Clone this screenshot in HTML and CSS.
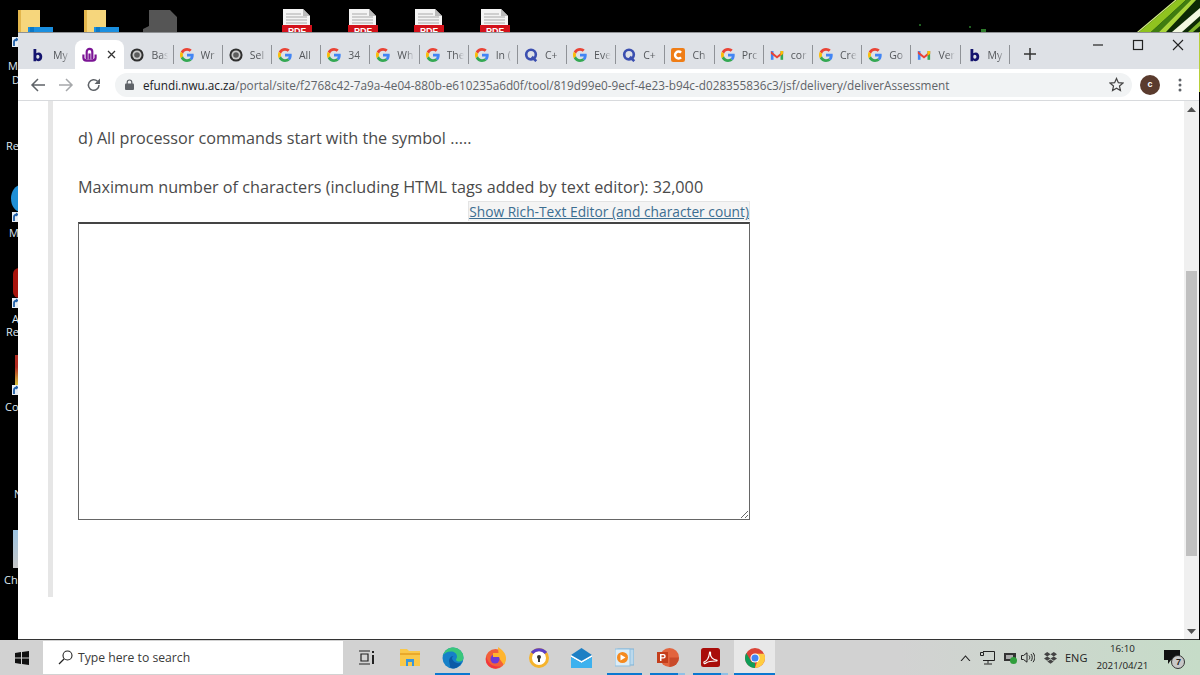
FILE: index.html
```html
<!DOCTYPE html>
<html lang="en">
<head>
<meta charset="utf-8">
<title>Assessment</title>
<link rel="stylesheet" href="styles.css">
</head>
<body>
<svg class="defs" width="0" height="0" aria-hidden="true">
  <symbol id="g" viewBox="0 0 48 48">
    <path fill="#EA4335" d="M24 9.500c3.540 0 6.710 1.220 9.210 3.600l6.850-6.850C35.900 2.380 30.470 0 24 0 14.620 0 6.510 5.380 2.560 13.220l7.980 6.190C12.430 13.720 17.740 9.500 24 9.500z"/>
    <path fill="#4285F4" d="M46.980 24.550c0-1.570-.15-3.090-.38-4.550H24v9.020h12.940c-.58 2.960-2.260 5.480-4.780 7.180l7.730 6c4.510-4.180 7.090-10.360 7.090-17.650z"/>
    <path fill="#FBBC05" d="M10.530 28.590c-.48-1.450-.76-2.990-.76-4.590s.27-3.140.76-4.590l-7.980-6.190C.92 16.460 0 20.120 0 24c0 3.880.92 7.540 2.560 10.780l7.970-6.190z"/>
    <path fill="#34A853" d="M24 48c6.480 0 11.930-2.130 15.890-5.810l-7.730-6c-2.150 1.450-4.920 2.300-8.160 2.300-6.260 0-11.570-4.220-13.470-9.910l-7.980 6.190C6.510 42.620 14.620 48 24 48z"/>
  </symbol>
  <symbol id="b" viewBox="0 0 16 16">
    <path fill="#14146e" d="M4 1h3.200v5C8 5.300 9 5 10 5c2.500 0 4 2 4 5s-1.700 5-4.200 5C8.800 15 7.800 14.600 7 14v1H4zm4.800 6.800C7.700 7.800 7.200 8.700 7.200 10s.5 2.300 1.600 2.300S10.800 11.300 10.800 10s-.9-2.200-2-2.200z"/>
  </symbol>
  <symbol id="nwu" viewBox="0 0 16 16">
    <path fill="none" stroke="#7b1495" stroke-width="2.300" d="M5 13V5a3 3 0 0 1 6 0v8M8 13V7M1.500 8v3.500c0 2 1.500 3 3.500 3h6c2 0 3.500-1 3.500-3V8"/>
  </symbol>
  <symbol id="gear" viewBox="0 0 16 16">
    <circle cx="8" cy="8" r="7.500" fill="#2f2f2f"/><circle cx="8" cy="8" r="5.200" fill="#c9c9c9"/><circle cx="8" cy="8" r="3.200" fill="#5c5c5c"/>
  </symbol>
  <symbol id="q" viewBox="0 0 16 16">
    <circle cx="8" cy="7.500" r="5.500" fill="none" stroke="#3b4fb0" stroke-width="3"/><path d="M9 10l5 5" stroke="#3b4fb0" stroke-width="3"/>
  </symbol>
  <symbol id="c" viewBox="0 0 16 16">
    <rect width="16" height="16" rx="2.500" fill="#ef7d16"/><path d="M11.500 5.200A4 4 0 1 0 11.500 10.800" fill="none" stroke="#fff" stroke-width="2.800"/>
  </symbol>
  <symbol id="m" viewBox="0 0 16 16">
    <path fill="#4285f4" d="M1 3.500h3v10H1z"/><path fill="#34a853" d="M12 3.500h3v10h-3z"/><path fill="#ea4335" d="M1 3.500 8 9l7-5.500v3L8 12 1 6.500z"/><path fill="#fbbc04" d="M12 3.500h3v3l-3 2.400z"/>
  </symbol>
  <symbol id="folder" viewBox="0 0 35 22">
    <path fill="#f6d67c" d="M0 0h22v22H0z"/><path fill="#e3b64c" d="M0 0h3v22H0z"/><path fill="#1a8fe0" d="M10 17h25v5H10z"/><path fill="#0b78c6" d="M12 17h4v5h-4z"/>
  </symbol>
  <symbol id="pdf" viewBox="0 0 30 23">
    <path fill="#f4f4f4" d="M1 0h20l7 7v9H1z"/><path fill="#bbb" d="M21 0l7 7h-7z"/><path stroke="#aaa" d="M4 5h15M4 8h21M4 11h21M4 14h21"/><path fill="#d3111a" d="M0 16h30v7H0z"/>
  </symbol>
  <symbol id="short" viewBox="0 0 7 10">
    <rect width="7" height="10" fill="#e6edf4"/><path d="M2 9V5c0-1.500 1-2.500 3-2.500" fill="none" stroke="#1f5fa8" stroke-width="1.800"/><path fill="#1f5fa8" d="M4 .5 7 2.500 4 4.500z"/>
  </symbol>
</svg>

<div class="desktop">
  <svg class="dicon folder-a" width="35" height="22"><use href="#folder"/></svg>
  <svg class="dicon folder-b" width="35" height="22"><use href="#folder"/></svg>
  <svg class="dicon grey-file" width="35" height="22" viewBox="0 0 35 22"><path fill="#555" d="M6 0h21l7 7v15H0v-3l6-3z"/></svg>
  <div class="dpdf pdf-a"><svg width="30" height="23"><use href="#pdf"/></svg><span class="pdf-label">PDF</span></div>
  <div class="dpdf pdf-b"><svg width="30" height="23"><use href="#pdf"/></svg><span class="pdf-label">PDF</span></div>
  <div class="dpdf pdf-c"><svg width="30" height="23"><use href="#pdf"/></svg><span class="pdf-label">PDF</span></div>
  <div class="dpdf pdf-d"><svg width="30" height="23"><use href="#pdf"/></svg><span class="pdf-label">PDF</span></div>

  <svg class="stripes" width="70" height="32" viewBox="0 0 70 32">
    <path fill="#0c2a05" d="M7 32 45 0h25v32z"/>
    <path fill="#d6e98a" d="M7 32 45 0h2L9 32z"/>
    <path fill="#8fc31f" d="M9 32 47 0h9L21 32z"/>
    <path fill="#3f7d10" d="M21 32 56 0h5L29 32z"/>
    <path fill="#a9d63a" d="M29 32 61 0h5L36 32z"/>
    <path fill="#f2f8e0" d="M42 32 70 8v8L52 32z"/>
    <path fill="#7fb52a" d="M58 32 70 21v5l-7 6z"/>
  </svg>
  <span class="dot dot-a"></span><span class="dot dot-b"></span><span class="dot dot-c"></span>
  <span class="right-strip"></span>

  <span class="dlabel l1">M</span>
  <span class="dlabel l2">D</span>
  <span class="dlabel l3">Re</span>
  <span class="dlabel l4">M</span>
  <span class="dlabel l5">A</span>
  <span class="dlabel l6">Re</span>
  <span class="dlabel l7">Co</span>
  <span class="dlabel l8">N</span>
  <span class="dlabel l9">Ch</span>
  <span class="blob blue"></span><span class="blob red"></span><span class="blob mix"></span><span class="blob bin"></span>
  <svg class="arrow a1" width="7" height="10"><use href="#short"/></svg>
  <svg class="arrow a2" width="7" height="10"><use href="#short"/></svg>
  <svg class="arrow a3" width="7" height="10"><use href="#short"/></svg>
  <svg class="arrow a4" width="7" height="10"><use href="#short"/></svg>

  <div class="window">
    <div class="tabstrip">
      <div class="tab"><svg class="fav" width="14" height="14"><use href="#b"/></svg><span class="tlabel">My</span></div>
      <div class="tab active"><svg class="fav" width="15" height="15"><use href="#nwu"/></svg><svg class="tclose" width="9" height="9" viewBox="0 0 9 9"><path d="M1 1l7 7M8 1 1 8" stroke="#333" stroke-width="1.300"/></svg></div>
      <div class="tab"><svg class="fav" width="14" height="14"><use href="#gear"/></svg><span class="tlabel">Bas</span></div>
      <div class="tab"><svg class="fav" width="14" height="14"><use href="#g"/></svg><span class="tlabel">Wr</span></div>
      <div class="tab"><svg class="fav" width="14" height="14"><use href="#gear"/></svg><span class="tlabel">Sel</span></div>
      <div class="tab"><svg class="fav" width="14" height="14"><use href="#g"/></svg><span class="tlabel">All</span></div>
      <div class="tab"><svg class="fav" width="14" height="14"><use href="#g"/></svg><span class="tlabel">34</span></div>
      <div class="tab"><svg class="fav" width="14" height="14"><use href="#g"/></svg><span class="tlabel">Wh</span></div>
      <div class="tab"><svg class="fav" width="14" height="14"><use href="#g"/></svg><span class="tlabel">The</span></div>
      <div class="tab"><svg class="fav" width="14" height="14"><use href="#g"/></svg><span class="tlabel">In (</span></div>
      <div class="tab"><svg class="fav" width="14" height="14"><use href="#q"/></svg><span class="tlabel">C+</span></div>
      <div class="tab"><svg class="fav" width="14" height="14"><use href="#g"/></svg><span class="tlabel">Eve</span></div>
      <div class="tab"><svg class="fav" width="14" height="14"><use href="#q"/></svg><span class="tlabel">C+</span></div>
      <div class="tab"><svg class="fav" width="14" height="14"><use href="#c"/></svg><span class="tlabel">Ch</span></div>
      <div class="tab"><svg class="fav" width="14" height="14"><use href="#g"/></svg><span class="tlabel">Prc</span></div>
      <div class="tab"><svg class="fav" width="14" height="14"><use href="#m"/></svg><span class="tlabel">cor</span></div>
      <div class="tab"><svg class="fav" width="14" height="14"><use href="#g"/></svg><span class="tlabel">Cre</span></div>
      <div class="tab"><svg class="fav" width="14" height="14"><use href="#g"/></svg><span class="tlabel">Go</span></div>
      <div class="tab"><svg class="fav" width="14" height="14"><use href="#m"/></svg><span class="tlabel">Ver</span></div>
      <div class="tab"><svg class="fav" width="14" height="14"><use href="#b"/></svg><span class="tlabel">My</span></div>
      <svg class="newtab" width="12" height="12" viewBox="0 0 12 12"><path d="M6 0v12M0 6h12" stroke="#333" stroke-width="1.500"/></svg>
      <div class="winctl">
        <svg width="12" height="12" viewBox="0 0 12 12"><path d="M1 6h10" stroke="#222" stroke-width="1.200"/></svg>
        <svg width="12" height="12" viewBox="0 0 12 12"><rect x="1.500" y="1.500" width="9" height="9" fill="none" stroke="#222" stroke-width="1.200"/></svg>
        <svg width="12" height="12" viewBox="0 0 12 12"><path d="M1 1l10 10M11 1 1 11" stroke="#222" stroke-width="1.100"/></svg>
      </div>
    </div>

    <div class="toolbar">
      <svg class="navicon" width="16" height="16" viewBox="0 0 16 16"><path d="M15 8H2M8 2 2 8l6 6" fill="none" stroke="#5f6368" stroke-width="1.500"/></svg>
      <svg class="navicon" width="16" height="16" viewBox="0 0 16 16"><path d="M1 8h13M8 2l6 6-6 6" fill="none" stroke="#a6a8ab" stroke-width="1.500"/></svg>
      <svg class="navicon" width="16" height="16" viewBox="0 0 16 16"><path d="M13 8a5.300 5.300 0 1 1-1.500-3.700" fill="none" stroke="#5f6368" stroke-width="1.500"/><path fill="#5f6368" d="M14 1.500V7H8.500z"/></svg>
      <div class="omnibox">
        <svg width="9" height="11" viewBox="0 0 9 11"><path d="M2.200 5V3.300a2.300 2.300 0 0 1 4.600 0V5" fill="none" stroke="#5f6368" stroke-width="1.200"/><rect y="4.500" width="9" height="6.500" rx="1" fill="#5f6368"/></svg>
        <span class="url"><span class="host">efundi.nwu.ac.za</span>/portal/site/f2768c42-7a9a-4e04-880b-e610235a6d0f/tool/819d99e0-9ecf-4e23-b94c-d028355836c3/jsf/delivery/deliverAssessment</span>
        <svg class="star" width="15" height="15" viewBox="0 0 16 16"><path d="M8 1.500l2 4.500 4.800.5-3.600 3.200 1 4.800L8 12l-4.200 2.500 1-4.800L1.200 6.500 6 6z" fill="none" stroke="#444" stroke-width="1.300"/></svg>
      </div>
      <span class="avatar">c</span>
      <svg class="menu" width="4" height="14" viewBox="0 0 4 14"><circle cx="2" cy="2" r="1.500" fill="#5f6368"/><circle cx="2" cy="7" r="1.500" fill="#5f6368"/><circle cx="2" cy="12" r="1.500" fill="#5f6368"/></svg>
    </div>

    <div class="viewport">
      <div class="rail"></div>
      <main class="main">
        <p class="question">d) All processor commands start with the symbol .....</p>
        <p class="limit">Maximum number of characters (including HTML tags added by text editor): 32,000</p>
        <div class="answer">
          <a class="show" href="#">Show Rich-Text Editor (and character count)</a>
          <textarea class="field" aria-label="Answer"></textarea>
        </div>
      </main>
      <div class="scrollbar">
        <svg class="sarrow" width="9" height="5" viewBox="0 0 9 5"><path d="M4.500 0 9 5H0z" fill="#505050"/></svg>
        <div class="thumb"></div>
        <svg class="sarrow" width="9" height="5" viewBox="0 0 9 5"><path d="M0 0h9L4.500 5z" fill="#505050"/></svg>
      </div>
    </div>
  </div>
</div>

<footer class="taskbar">
  <div class="start"><svg width="14" height="14" viewBox="0 0 14 14"><path fill="#111" d="M0 2l6-.9V6.600H0zM7 1l7-1v6.600H7zM0 7.400h6v5.500l-6-.9zM7 7.400h7V14l-7-1z"/></svg></div>
  <div class="search">
    <svg width="15" height="15" viewBox="0 0 15 15"><circle cx="9.500" cy="5.500" r="4.500" fill="none" stroke="#222" stroke-width="1.100"/><path d="M6 9 1 14" stroke="#222" stroke-width="1.300"/></svg>
    <span>Type here to search</span>
  </div>
  <div class="slot"><svg width="15" height="15" viewBox="0 0 15 15"><path fill="none" stroke="#222" stroke-width="1.200" d="M0 1h11M0 14h11M2 4h7v7H2z"/><path fill="#222" d="M13 1h2v2h-2zM13 5h2v9h-2z"/></svg></div>
  <div class="slot"><svg width="20" height="17" viewBox="0 0 20 17"><path fill="#f9c84a" d="M0 0h7l2 2h11v15H0z"/><path fill="#e9a92b" d="M0 4h20v2H0z"/><path fill="#3a96dc" d="M6 10h8v7h-2v-4H8v4H6z"/></svg></div>
  <div class="slot on"><svg width="22" height="22" viewBox="0 0 22 22"><circle cx="11" cy="11" r="10.500" fill="#1580c8"/><path fill="#39c77b" d="M1 9C2 3 7 .5 11 .5c6 0 10.500 4.500 10.500 10 0 2.500-1.500 4-4 4-2 0-3.500-.7-3.500-1.800 0-1 1-1.200 1-3.200 0-3-3-5-6-5-4 0-7 2-8.500 4.500z"/><path fill="#0c5aa6" d="M7 14c0-3 2-5 4.500-5-2 1-2 3 0 5 2 2 5 3 8 1.500-2 3.500-5 6-8.500 6-2 0-3.500-1-3-3-.5-1-.5-3-1-4.500z"/></svg></div>
  <div class="slot"><svg width="21" height="22" viewBox="0 0 21 22"><circle cx="10.500" cy="12" r="10" fill="#f2603a"/><path fill="#ffb52e" d="M13 0c5 3 8 7 8 11 0 3-1 5-2 7l-5-7c0-3-1-7-1-11z"/><path fill="#f2363f" d="M1 9c2 8 8 12 15 10-4 4-13 3-15-5z"/><circle cx="10" cy="12" r="4.500" fill="#6d3bd6"/><path fill="#ffb52e" d="M8 6h6v4H8z"/></svg></div>
  <div class="slot"><svg width="20" height="20" viewBox="0 0 20 20"><circle cx="10" cy="10" r="8.500" fill="#fff" stroke="#f5b32c" stroke-width="3"/><path fill="none" stroke="#5b3fc7" stroke-width="3" d="M3 5a9 9 0 0 1 14 0"/><circle cx="10" cy="9" r="2" fill="#333"/><path d="M9 10h2v4H9z" fill="#333"/></svg></div>
  <div class="slot"><svg width="21" height="20" viewBox="0 0 21 20"><path fill="#1d7fc4" d="M0 7l10.500-7L21 7v13H0z"/><path fill="#fff" d="M0 7l10.500 6L21 7v2l-10.500 6L0 9z"/><path fill="#3db1ee" d="M0 9l10.500 6L21 9v11H0z"/></svg></div>
  <div class="slot on"><svg width="19" height="19" viewBox="0 0 19 19"><rect x="3" y="1" width="16" height="16" fill="#bcd9ec" stroke="#7fb2d6"/><rect width="15" height="17" y="1" fill="#dcecf6" stroke="#8fbfdf"/><circle cx="7.500" cy="9.500" r="5.500" fill="#f58a1f"/><path fill="#fff" d="M5.500 6.500l5 3-5 3z"/></svg></div>
  <div class="slot on split"><svg width="22" height="19" viewBox="0 0 22 19"><circle cx="12.500" cy="9.500" r="9.500" fill="#e2643e"/><path fill="#c94a2a" d="M12.500 9.500H22a9.500 9.500 0 0 1-9.500 9.500z"/><rect y="4" width="11" height="11" fill="#c43e1c"/><path fill="#fff" d="M3 6h3.500a2.200 2.200 0 0 1 0 4.500H4.500V13H3zm1.500 1.200v2h1.800a1 1 0 0 0 0-2z"/></svg></div>
  <div class="slot on split"><svg width="19" height="19" viewBox="0 0 19 19"><rect width="19" height="19" rx="2.500" fill="#a90d0a"/><path fill="none" stroke="#fff" stroke-width="1.200" d="M3 14c3-1 5-5 5.500-9 0-1.500 1.500-1.500 1 1-.5 3 3 6 6 6 .8 0 .8 1-.5 1-4 0-8 .5-10 2-1.500 1.200-2.500.3-2 -1z"/></svg></div>
  <div class="slot chrome"><svg width="20" height="20" viewBox="0 0 48 48"><circle cx="24" cy="24" r="24" fill="#db4437"/><path fill="#0f9d58" d="M24 48C11 48 0 37 0 24c0-4 1-8 3-12l13 22 8 0z"/><path fill="#ffcd40" d="M24 48c13 0 24-11 24-24 0-4-1-8-3-10H24l8 10z"/><circle cx="24" cy="24" r="11" fill="#fff"/><circle cx="24" cy="24" r="8.500" fill="#4285f4"/></svg></div>
  <div class="tray">
    <svg class="t-chev" width="11" height="6" viewBox="0 0 11 6"><path d="M1 6l4.500-5L10 6" fill="none" stroke="#222" stroke-width="1.100"/></svg>
    <svg class="t-net" width="15" height="14" viewBox="0 0 15 14"><path fill="none" stroke="#222" d="M.5 1.500h3v3h-3zM3 .5h11.500v9H3M8 9.500v3M4 13h8"/></svg>
    <svg class="t-bat" width="13" height="12" viewBox="0 0 13 12"><rect y="1" width="12" height="8" fill="#333"/><rect x="2" y="3" width="7" height="4" fill="#aaa"/><circle cx="9.500" cy="8.500" r="3.500" fill="#2f9e3b"/></svg>
    <svg class="t-vol" width="14" height="11" viewBox="0 0 14 11"><path fill="none" stroke="#222" d="M.5 3.500h2L6 .8v9.400L2.500 7.500h-2zM8 3.500c1 1 1 3 0 4M10 2c1.700 2 1.700 5 0 7M12 .8c2.300 3 2.300 6.400 0 9.400"/></svg>
    <svg class="t-drop" width="13" height="12" viewBox="0 0 13 12"><path fill="#444" d="M3.200 0 6.500 2.200 3.200 4.400 0 2.200zM9.800 0 13 2.200 9.800 4.400 6.500 2.200zM3.200 4.400 6.500 6.600 3.200 8.800 0 6.600zM9.800 4.400 13 6.600 9.800 8.800 6.500 6.600zM3.300 9.500 6.500 7.400l3.200 2.100-3.200 2.200z"/></svg>
    <span class="t-lang">ENG</span>
    <div class="clock"><span>16:10</span><span>2021/04/21</span></div>
    <div class="notify">
      <svg width="16" height="14" viewBox="0 0 16 14"><path fill="#111" d="M0 0h16v10H7l-3 4v-4H0z"/></svg>
      <span class="badge">7</span>
    </div>
  </div>
</footer>
</body>
</html>
```

FILE: styles.css
```css
* { box-sizing: border-box; }
html, body { margin: 0; height: 100%; }
body {
  width: 1200px;
  height: 675px;
  overflow: hidden;
  background: #000;
  font-family: "Open Sans", "Liberation Sans", sans-serif;
  display: flex;
  flex-direction: column;
}
.defs { position: absolute; }

/* Desktop canvas */
.desktop { position: relative; height: 640px; flex: none; background: #000; }
.dicon, .dpdf, .stripes, .dot, .right-strip, .dlabel, .arrow, .blob, .window { position: absolute; }
.dicon { top: 10px; }
.folder-a { left: 18px; }
.folder-b { left: 84px; }
.grey-file { left: 143px; }
.dpdf { top: 9px; width: 30px; height: 23px; }
.dpdf svg { display: block; }
.pdf-a { left: 282px; }
.pdf-b { left: 348px; }
.pdf-c { left: 414px; }
.pdf-d { left: 480px; }
.pdf-label {
  position: absolute;
  left: 0;
  right: 0;
  top: 18px;
  height: 5px;
  overflow: hidden;
  color: #fff;
  font: 700 9px/9px "Liberation Sans", sans-serif;
  text-align: center;
}
.stripes { left: 1130px; top: 0; }
.dot { width: 2px; height: 2px; background: #1f5f20; }
.dot-a { left: 919px; top: 24px; }
.dot-b { left: 969px; top: 26px; }
.dot-c { left: 981px; top: 29px; width: 5px; height: 4px; background: #2d7a2a; }
.right-strip { left: 1198px; top: 32px; width: 2px; height: 60px; background: #b7cf3a; }

.dlabel { color: #dfe9f5; font-size: 11px; line-height: 13px; }
.l1 { left: 8px; top: 59px; }
.l2 { left: 12px; top: 73px; }
.l3 { left: 6px; top: 139px; }
.l4 { left: 9px; top: 226px; }
.l5 { left: 12px; top: 312px; }
.l6 { left: 6px; top: 325px; }
.l7 { left: 5px; top: 400px; }
.l8 { left: 14px; top: 487px; }
.l9 { left: 4px; top: 573px; }
.arrow { left: 12px; display: block; }
.a1 { top: 37px; }
.a2 { top: 212px; }
.a3 { top: 298px; }
.a4 { top: 385px; }
.blob { left: 11px; width: 20px; }
.blue { top: 185px; height: 27px; border-radius: 50%; background: #1f8fd6; }
.red { top: 268px; height: 30px; left: 13px; border-radius: 6px 0 0 6px; background: #a8140c; }
.mix { top: 355px; height: 30px; background: linear-gradient(#b02a20 40%, #d7c23a); left: 15px; }
.bin { top: 530px; height: 38px; left: 13px; background: linear-gradient(#9cc4e2, #c6c6c6); }

/* Browser window */
.window {
  left: 18px;
  top: 32px;
  width: 1181px;
  height: 608px;
  display: flex;
  flex-direction: column;
  background: #fff;
  border-top: 1px solid #8f9194;
  border-bottom: 1px solid #333;
}
.tabstrip {
  height: 36px;
  flex: none;
  display: flex;
  align-items: flex-end;
  padding-left: 8px;
  background: #dee1e6;
  position: relative;
}
.tab {
  width: 49.2px;
  height: 29px;
  flex: none;
  display: flex;
  align-items: center;
  gap: 7px;
  padding: 0 0 0 6px;
  position: relative;
  border-right: 1px solid #8f9297;
  border-image: linear-gradient(transparent 20%, #8f9297 20%, #8f9297 80%, transparent 80%) 1;
}
.fav { flex: none; }
.tlabel {
  color: #54575b;
  font-size: 10.5px;
  line-height: 14px;
  width: 17px;
  white-space: nowrap;
  overflow: hidden;
  -webkit-mask-image: linear-gradient(90deg, #000 55%, transparent);
  mask-image: linear-gradient(90deg, #000 55%, transparent);
}
.tab.active {
  background: #fff;
  border: 0;
  border-radius: 8px 8px 0 0;
  padding-left: 7px;
  gap: 10px;
}
.tab:first-child { border: 0; padding-left: 4px; gap: 9px; }
.tclose { flex: none; }
.newtab { margin: 0 0 9px 14px; flex: none; }
.winctl {
  position: absolute;
  top: 6px;
  right: 15px;
  display: flex;
  gap: 28px;
}
.toolbar {
  height: 32px;
  flex: none;
  display: flex;
  align-items: center;
  padding-left: 12px;
  background: #fff;
  border-bottom: 1px solid #d8dadd;
}
.navicon { flex: none; margin-right: 12px; }
.omnibox {
  width: 1017px;
  height: 24px;
  margin-left: 1px;
  display: flex;
  align-items: center;
  padding: 0 8px 0 10px;
  border-radius: 12px;
  background: #f1f3f4;
}
.url {
  margin-left: 9px;
  flex: 1;
  font-size: 11.75px;
  white-space: nowrap;
  color: #5f6368;
}
.host { color: #202124; }
.star { flex: none; }
.avatar {
  margin-left: 8px;
  width: 20px;
  height: 20px;
  flex: none;
  border-radius: 50%;
  background: #5a3b2e;
  color: #fff;
  font: 700 9px/19px "Liberation Sans", sans-serif;
  text-align: center;
}
.menu { margin-left: 18px; flex: none; }

/* Page */
.viewport { flex: 1; min-height: 0; display: flex; background: #fff; }
.rail { margin-left: 30px; width: 5px; height: 496px; flex: none; background: #e6e6e6; }
.main { flex: 1; padding: 25px 0 0 25px; color: #4a4a4a; }
.question { margin: 0; font-size: 16.2px; line-height: 24px; }
.limit { margin: 25px 0 0; font-size: 16.2px; line-height: 24px; }
.answer { width: 672px; display: flex; flex-direction: column; align-items: flex-end; }
.show {
  color: #3c6e91;
  font-size: 13.76px;
  line-height: 19px;
  margin-top: 2px;
  background: #f4f4f4;
  border: 1px solid #e4e4e4;
  border-bottom: 0;
  white-space: nowrap;
}
.field {
  display: block;
  width: 672px;
  height: 298px;
  margin: 1px 0 0;
  border: 1px solid #666;
  border-top: 2px solid #444;
  background: #fff;
  padding: 2px;
  outline: 0;
}
.scrollbar {
  width: 15px;
  flex: none;
  display: flex;
  flex-direction: column;
  align-items: center;
  background: #f0f0f0;
  padding: 6px 0 5px;
}
.sarrow { flex: none; }
.thumb { width: 11px; height: 285px; margin-top: 159px; margin-bottom: auto; background: #c0c0c0; }

/* Taskbar */
.taskbar {
  flex: 1;
  display: flex;
  align-items: stretch;
  background: linear-gradient(90deg, #d2d2d2 0%, #d2d2d2 75%, #c6dcc8 100%);
}
.start { width: 43px; flex: none; display: flex; align-items: center; justify-content: center; }
.search {
  width: 300px;
  flex: none;
  margin: 1px 2px 1px 0;
  display: flex;
  align-items: center;
  gap: 5px;
  padding-left: 15px;
  background: #fff;
  color: #3a3a3a;
  font-size: 12.2px;
}
.slot {
  width: 35px;
  margin: 0 4px;
  flex: none;
  display: flex;
  align-items: center;
  justify-content: center;
  border-bottom: 2px solid transparent;
  padding-top: 2px;
}
.slot.on { border-bottom: 2px solid #0b78d0; }
.slot.split { border-image: linear-gradient(90deg, #0b78d0 78%, #8fc0e6 78%) 1; }
.slot.chrome { width: 41px; margin: 0 0 0 2px; background: #e8e8e8; border-bottom: 2px solid #0b78d0; }
.tray {
  flex: 1;
  display: flex;
  align-items: center;
  color: #222;
  padding-left: 185px;
}
.t-chev, .t-net, .t-bat, .t-vol, .t-drop { flex: none; }
.t-net { margin-left: 9px; }
.t-bat { margin-left: 9px; }
.t-vol { margin-left: 4px; }
.t-drop { margin-left: 9px; }
.t-lang { margin-left: 8px; font-size: 11px; }
.clock {
  margin-left: 9px;
  width: 52px;
  display: flex;
  flex-direction: column;
  align-items: center;
  gap: 3px;
  font-size: 9.8px;
  line-height: 14px;
  white-space: nowrap;
}
.notify { margin-left: 16px; position: relative; width: 24px; height: 26px; padding-top: 5px; }
.notify svg { display: block; }
.badge {
  position: absolute;
  left: 7px;
  top: 10px;
  width: 14px;
  height: 14px;
  border-radius: 50%;
  border: 1px solid #333;
  background: #c8c8c8;
  font: 700 9px/12px "Liberation Sans", sans-serif;
  text-align: center;
}
```
